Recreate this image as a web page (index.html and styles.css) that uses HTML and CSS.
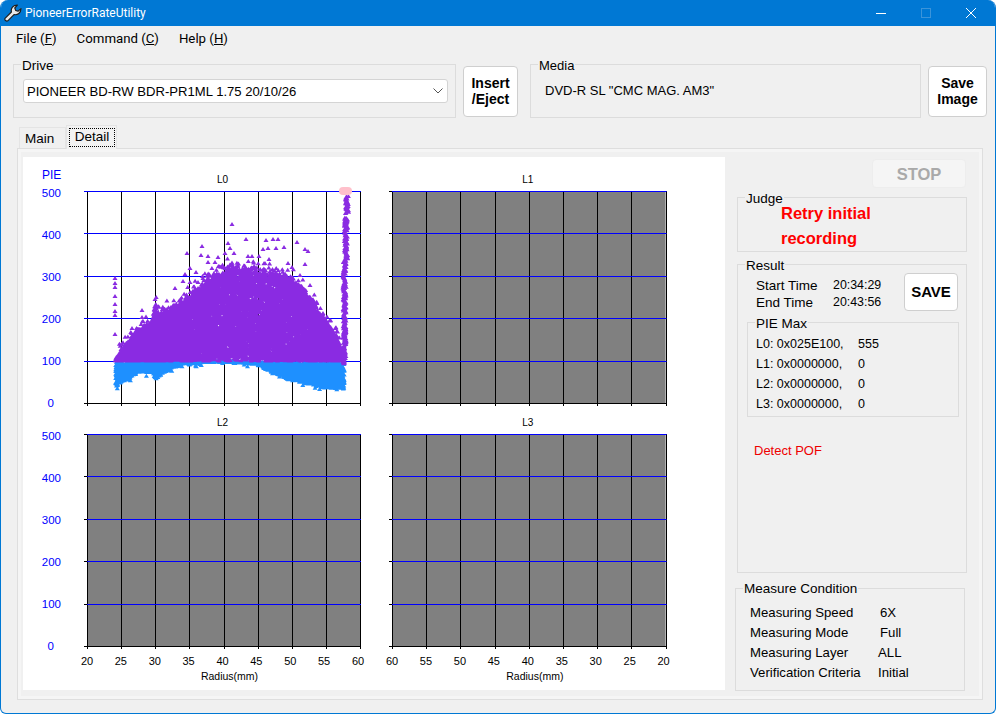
FILE: index.html
```html
<!DOCTYPE html>
<html lang="en">
<head>
    <meta charset="UTF-8">
    <meta name="viewport" content="width=device-width, initial-scale=1.0">
    <title>PioneerErrorRateUtility</title>
    <link rel="stylesheet" href="styles.css">
</head>
<body>

<div class="window">
    <div class="titlebar">
        <svg class="app-icon" width="18" height="18" viewBox="0 0 18 18">
            <path d="M1 14.4 L7.4 8 C6.6 4.6 9 1 13.4 1 L10.8 4 L11.6 6.4 L14 7.2 L17 4.6 C17 8.8 13.6 11.4 10 10.6 L3.8 16.8 C2.4 17.8 0.2 16 1 14.4 Z" fill="#e8e8e8" stroke="#1f1f1f" stroke-width="1.2" stroke-linejoin="round"/>
        </svg>
        <span class="app-title">PioneerErrorRateUtility</span>
        <div class="win-controls">
            <div class="win-btn"><svg width="10" height="10" viewBox="0 0 10 10"><path d="M0 5.5 H10" stroke="#fff"/></svg></div>
            <div class="win-btn"><svg width="10" height="10" viewBox="0 0 10 10"><rect x="0.5" y="0.5" width="9" height="9" fill="none" stroke="#3b94da"/></svg></div>
            <div class="win-btn"><svg width="10" height="10" viewBox="0 0 10 10"><path d="M0 0 L10 10 M10 0 L0 10" stroke="#fff"/></svg></div>
        </div>
    </div>

    <div class="menu">
        <span>File (<u>F</u>)</span>
        <span>Command (<u>C</u>)</span>
        <span>Help (<u>H</u>)</span>
    </div>

    <div class="top-row">
        <div class="group drive-group">
            <span class="group-label">Drive</span>
            <div class="combo">
                <span>PIONEER BD-RW BDR-PR1ML 1.75 20/10/26</span>
                <svg width="10" height="6" viewBox="0 0 10 6"><path d="M0.5 0.5 L5 5 L9.5 0.5" fill="none" stroke="#555"/></svg>
            </div>
        </div>
        <button class="btn insert-btn">Insert<br>/Eject</button>
        <div class="group media-group">
            <span class="group-label">Media</span>
            <div class="media-name">DVD-R SL "CMC MAG. AM3"</div>
        </div>
        <button class="btn image-btn">Save<br>Image</button>
    </div>

    <div class="tabs">
        <div class="tab">Main</div>
        <div class="tab active"><span class="tab-focus">Detail</span></div>
    </div>

    <div class="tab-panel">
        <div class="charts" id="charts"></div>

        <div class="side">
            <button class="btn stop-btn" disabled>STOP</button>

            <div class="group judge-group">
                <span class="group-label">Judge</span>
                <div class="judge-text">Retry initial<br>recording</div>
            </div>

            <div class="group result-group">
                <span class="group-label">Result</span>
                <div class="result-head">
                    <div class="times">
                        <span>Start Time</span><span class="num">20:34:29</span>
                        <span>End Time</span><span class="num">20:43:56</span>
                    </div>
                    <button class="btn save-btn">SAVE</button>
                </div>
                <div class="group pie-group">
                    <span class="group-label">PIE Max</span>
                    <div class="pie-rows">
                        <span>L0: 0x025E100,</span><span>555</span>
                        <span>L1: 0x0000000,</span><span>0</span>
                        <span>L2: 0x0000000,</span><span>0</span>
                        <span>L3: 0x0000000,</span><span>0</span>
                    </div>
                </div>
                <div class="detect">Detect POF</div>
            </div>

            <div class="group cond-group">
                <span class="group-label">Measure Condition</span>
                <div class="cond-rows">
                    <span>Measuring Speed</span><span>6X</span>
                    <span>Measuring Mode</span><span>Full</span>
                    <span>Measuring Layer</span><span class="shift">ALL</span>
                    <span>Verification Criteria</span><span class="shift">Initial</span>
                </div>
            </div>
        </div>
    </div>
</div>

<script src="script.js"></script>
</body>
</html>
```

FILE: styles.css
```css
/* Page */
* {
    box-sizing: border-box;
}
body {
    margin: 0;
    background-color: #fff;
    font-family: "Liberation Sans", Arial, sans-serif;
    font-size: 13.5px;
    color: #000;
    overflow: hidden;
}
.window {
    width: 996px;
    height: 714px;
    background-color: #f0f0f0;
    border: 1px solid #0078d4;
    border-top: none;
    border-radius: 8px 8px 6px 6px;
    overflow: hidden;
}

/* Title bar */
.titlebar {
    display: flex;
    align-items: center;
    height: 26px;
    background-color: #0078d4;
    color: #fff;
    font-family: Roboto, sans-serif;
    font-size: 12px;
}
.app-icon {
    margin-left: 3px;
    margin-right: 3px;
}
.win-controls {
    display: flex;
    margin-left: auto;
    padding-right: 2px;
}
.win-btn {
    display: flex;
    align-items: center;
    justify-content: center;
    width: 45px;
    height: 26px;
}

/* Menu */
.menu {
    display: flex;
    gap: 20px;
    align-items: center;
    height: 24px;
    padding-left: 15px;
    font-family: Roboto, sans-serif;
    font-size: 13.25px;
}

/* Group boxes */
.group {
    position: relative;
    border: 1px solid #dcdcdc;
}
.group-label {
    position: absolute;
    top: -6px;
    left: 7px;
    padding: 0 1px;
    line-height: 14px;
    background-color: #f0f0f0;
}

/* Buttons */
.btn {
    background-color: #fff;
    border: 1px solid #cfcfcf;
    border-radius: 4px;
    font-family: "Liberation Sans", Arial, sans-serif;
    font-weight: bold;
    font-size: 14px;
    line-height: 16px;
    color: #000;
    padding: 0;
}

/* Drive and media row */
.top-row {
    display: flex;
    align-items: flex-end;
    height: 54px;
    margin-top: 14px;
    padding-left: 12px;
}
.drive-group {
    width: 443px;
    height: 54px;
    padding: 14px 7px 0 9px;
}
.combo {
    display: flex;
    align-items: center;
    justify-content: space-between;
    height: 24px;
    padding: 0 4px 0 3px;
    background-color: #fff;
    border: 1px solid #d4d4d4;
    border-radius: 3px;
    font-size: 13.1px;
}
.insert-btn {
    width: 55px;
    height: 51px;
    margin-left: 7px;
    margin-bottom: 1px;
    padding-bottom: 2px;
}
.media-group {
    width: 391px;
    height: 54px;
    margin-left: 12px;
    padding: 18px 0 0 14px;
    font-size: 13px;
}
.image-btn {
    width: 59px;
    height: 51px;
    margin-left: 7px;
    margin-bottom: 1px;
    padding-bottom: 2px;
}

/* Tabs */
.tabs {
    display: flex;
    align-items: flex-end;
    height: 23px;
    margin-top: 7px;
    padding-left: 18px;
}
.tab {
    width: 47px;
    height: 21px;
    padding: 3px 0 0 5px;
    border: 1px solid #e4e4e4;
    border-bottom: none;
    font-size: 13.5px;
}
.tab.active {
    position: relative;
    width: 51px;
    height: 24px;
    margin-bottom: -1px;
    padding: 2px 0 0 2px;
    background-color: #f2f2f2;
}
.tab-focus {
    display: block;
    width: 46px;
    height: 19px;
    line-height: 15px;
    text-align: center;
    border: 1px dotted #000;
}
.tab-panel {
    display: flex;
    width: 966px;
    height: 552px;
    margin-left: 16px;
    padding: 8px 0 0 5px;
    border: 1px solid #dedede;
    box-shadow: inset 0 0 0 3px #f5f5f5;
}

/* Charts */
.charts {
    display: grid;
    grid-template-columns: 352px 350px;
    grid-template-rows: 253px 280px;
    flex: none;
    width: 702px;
    height: 533px;
    background-color: #fff;
}
.charts svg {
    display: block;
}
.chart-title {
    font-size: 10px;
    text-anchor: middle;
}
.chart-num {
    font-size: 11px;
    text-anchor: middle;
}
.chart-pie {
    font-size: 12px;
    fill: #0000ff;
}
.chart-y {
    font-size: 11.5px;
    fill: #0000ff;
    text-anchor: end;
}
.chart-radius {
    font-size: 10.5px;
    text-anchor: middle;
}

/* Right column */
.side {
    flex: 1;
    display: flex;
    flex-direction: column;
    align-items: flex-start;
    padding-left: 12px;
}
.stop-btn {
    width: 94px;
    height: 29px;
    margin-top: 2px;
    margin-left: 135px;
    background-color: #f5f5f5;
    border-color: #ededed;
    color: #a9a9a9;
    font-size: 16.5px;
}
.judge-group {
    width: 230px;
    height: 55px;
    margin-top: 9px;
    padding: 3px 0 0 43px;
}
.judge-text {
    font-weight: bold;
    font-size: 16.5px;
    line-height: 25px;
    color: #ff0000;
}
.result-group {
    width: 230px;
    height: 309px;
    margin-top: 12px;
    padding: 8px 8px 0 18px;
}
.result-head {
    display: flex;
    justify-content: space-between;
    align-items: flex-start;
}
.times {
    display: grid;
    grid-template-columns: 77px auto;
    line-height: 17px;
    padding-top: 4px;
}
.num {
    font-size: 12.4px;
}
.save-btn {
    width: 54px;
    height: 38px;
    font-size: 15px;
}
.pie-group {
    width: 212px;
    height: 95px;
    margin-top: 11px;
    margin-left: -9px;
    padding: 11px 0 0 8px;
}
.pie-rows {
    display: grid;
    grid-template-columns: 102px auto;
    justify-content: start;
    font-size: 12.5px;
    line-height: 20px;
}
.detect {
    margin-top: 25px;
    margin-left: -2px;
    font-size: 13px;
    line-height: 18px;
    color: #ee0000;
}
.cond-group {
    width: 230px;
    height: 103px;
    margin-top: 15px;
    margin-left: -2px;
    padding: 14px 0 0 14px;
}
.cond-group .group-label {
    top: -7px;
}
.cond-rows {
    display: grid;
    grid-template-columns: 130px auto;
    justify-content: start;
    font-size: 13.2px;
    line-height: 20px;
}
.shift {
    margin-left: -2px;
}
```

FILE: script.js
```js
const SVG_NS = "http://www.w3.org/2000/svg";
const H_LINES = [0, 100, 200, 300, 400, 500];
const TICKS = [0, 1, 2, 3, 4, 5, 6, 7, 8];
const PLOT_H = 212;

// layer, cell size, plot offset, plot width, labels
const charts = [
    { name: "L0", w: 352, h: 253, x: 64, y: 34, pw: 273, grey: false, yLabels: true, xLabels: null },
    { name: "L1", w: 350, h: 253, x: 17, y: 34, pw: 273.6, grey: true, yLabels: false, xLabels: null },
    { name: "L2", w: 352, h: 280, x: 64, y: 24, pw: 273, grey: true, yLabels: true, xLabels: [20, 25, 30, 35, 40, 45, 50, 55, 60] },
    { name: "L3", w: 350, h: 280, x: 17, y: 24, pw: 273.6, grey: true, yLabels: false, xLabels: [60, 55, 50, 45, 40, 35, 30, 25, 20] }
];

// points that stand clear of the main cloud, read off the L0 plot (page px)
const outliers = [
    [232, 224], [246, 239], [266, 240], [273, 239], [278, 239], [297, 242], [202, 246], [187, 253],
    [201, 255], [208, 256], [218, 257], [228, 243], [230, 248], [225, 253], [234, 253], [263, 249],
    [268, 248], [276, 248], [284, 247], [305, 249], [308, 251], [248, 256], [252, 256], [259, 256],
    [269, 259], [265, 263], [305, 264], [288, 263], [292, 267], [190, 268], [185, 274], [175, 288],
    [183, 281], [190, 282], [198, 282], [115, 278], [115, 283], [115, 287], [115, 296], [115, 304],
    [115, 311], [115, 315], [115, 334], [142, 310], [142, 317], [196, 272], [208, 262], [215, 262],
    [300, 275], [293, 278], [310, 285], [317, 303], [323, 313]
];

// small repeatable random, so the cloud is the same on every load
let seed = 4711;
function rnd() {
    seed = (seed * 16807) % 2147483647;
    return seed / 2147483647;
}

function lerpTable(table, r) {
    for (let i = 1; i < table.length; i++) {
        if (r <= table[i][0]) {
            const a = table[i - 1], b = table[i];
            return a[1] + (b[1] - a[1]) * (r - a[0]) / (b[0] - a[0]);
        }
    }
    return table[table.length - 1][1];
}

const purpleTop = [[24, 105], [25, 125], [26, 150], [27, 172], [28, 180], [29, 190], [29.7, 205], [30, 255], [30.4, 215], [32, 225], [33, 240], [35, 262], [37, 290], [39, 310], [41, 330], [43, 330], [45, 325], [47, 315], [50, 302], [52, 270], [54, 225], [55, 198], [56.5, 165], [57.3, 125], [57.6, 100]];
const blueBottom = [[24, 32], [25, 45], [26, 50], [27.5, 68], [29.7, 72], [30, 50], [30.5, 62], [32.5, 82], [35, 90], [40, 95], [45, 87], [47, 75], [50, 50], [52, 40], [55, 31], [57.7, 28]];

function triangle(px, py) {
    return "M" + (px - 2.5).toFixed(1) + " " + (py + 2).toFixed(1) + "l2.5 -4l2.5 4z";
}

function buildCloud(plotX, plotY) {
    const toX = r => plotX + (r - 20) * 273 / 40;
    const toY = v => plotY + PLOT_H - v * PLOT_H / 500;
    let blue = "", purple = "";
    let rough = 0;

    for (let r = 24.2; r <= 57.7; r += 0.06) {
        // the edges of the cloud are rough, not a clean curve
        if (rnd() < 0.08) rough = rnd() * 7;
        const low = lerpTable(blueBottom, r) + rough;
        const top = lerpTable(purpleTop, r) * (1 - 0.07 * rnd());
        for (let i = 0; i < 7; i++) {
            blue += triangle(toX(r), toY(low + (97 - low) * rnd()));
        }
        if (rnd() < 0.04) blue += triangle(toX(r), toY(low - rnd() * 8));
        for (let i = 0; i < 22; i++) {
            const floor = r > 36 && r < 47 && rnd() < 0.25 ? 108 : 100;
            purple += triangle(toX(r), toY(floor + (top - floor) * rnd()));
        }
        if (rnd() < 0.2) purple += triangle(toX(r), toY(top + rnd() * 22));
    }
    // right hand spike climbing to the top of the scale
    for (let v = 100; v < 490; v += 1.5) {
        if (v > 438 && v < 448) continue;
        const centre = v > 445 ? 58.1 : v > 340 ? 57.95 : 57.73;
        purple += triangle(toX(centre + (rnd() - 0.5) * 0.5), toY(v));
    }
    outliers.forEach(p => {
        purple += triangle(p[0] - 23, p[1] - 157 + plotY - 34);
    });
    return { blue, purple };
}

function add(svg, tag, attrs, text) {
    const el = document.createElementNS(SVG_NS, tag);
    Object.keys(attrs).forEach(k => el.setAttribute(k, attrs[k]));
    if (text !== undefined) el.textContent = text;
    svg.appendChild(el);
    return el;
}

function drawChart(c) {
    const svg = document.createElementNS(SVG_NS, "svg");
    svg.setAttribute("width", c.w);
    svg.setAttribute("height", c.h);
    const bottom = c.y + PLOT_H;
    const right = c.x + c.pw;
    const stepX = c.pw / 8;

    if (c.grey) add(svg, "rect", { x: c.x, y: c.y, width: c.pw, height: PLOT_H, fill: "#808080" });

    TICKS.forEach(i => {
        const x = Math.round(c.x + i * stepX) + 0.5;
        add(svg, "line", { x1: x, y1: c.y, x2: x, y2: bottom + 3, stroke: "#000" });
    });
    H_LINES.forEach(v => {
        const y = Math.round(bottom - v * PLOT_H / 500) + 0.5;
        const tickColor = c.grey ? "#000" : (v === 0 ? "#000" : "#0000ff");
        add(svg, "line", { x1: c.x - 3, y1: y, x2: c.x, y2: y, stroke: tickColor });
        add(svg, "line", { x1: c.x, y1: y, x2: right + 1, y2: y, stroke: v === 0 ? "#000" : "#0000ff" });
        if (c.yLabels) {
            // labels sit on their own 42px pitch, not quite on the grid lines
            const labelY = c.y + (500 - v) * 42 / 100 + 6;
            add(svg, "text", { class: "chart-y", x: v === 0 ? 31 : 38, y: labelY }, v);
        }
    });

    if (c.name === "L0") {
        const cloud = buildCloud(c.x, c.y);
        add(svg, "path", { d: cloud.blue, fill: "#1e90ff" });
        add(svg, "path", { d: cloud.purple, fill: "#8a2be2" });
        add(svg, "rect", { x: 316, y: 30, width: 13, height: 8, rx: 4, fill: "#ffc0cb" });
        add(svg, "text", { class: "chart-pie", x: 19, y: 22 }, "PIE");
    }

    add(svg, "text", { class: "chart-title", x: c.x + c.pw / 2 - 1, y: c.name < "L2" ? 26 : 16 }, c.name);

    if (c.xLabels) {
        c.xLabels.forEach((label, i) => {
            add(svg, "text", { class: "chart-num", x: c.x + i * (stepX - 0.25), y: bottom + 19 }, label);
        });
        add(svg, "text", { class: "chart-radius", x: c.x + c.pw / 2 + 6, y: bottom + 34 }, "Radius(mm)");
    }
    document.getElementById("charts").appendChild(svg);
}

charts.forEach(drawChart);
```
